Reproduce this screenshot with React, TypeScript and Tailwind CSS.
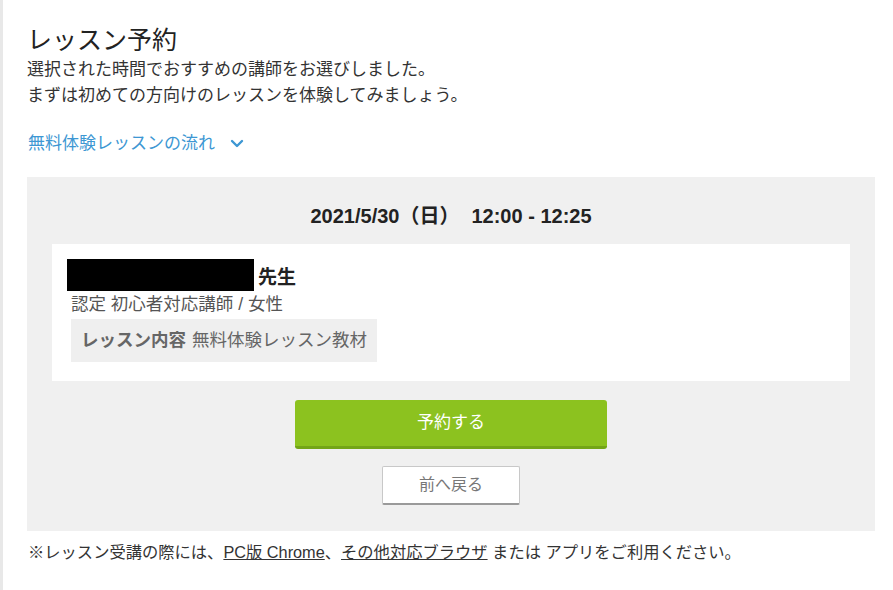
const jp = '"Liberation Sans", "Noto Sans CJK JP", sans-serif';

function ChevronDown() {
  return (
    <svg viewBox="0 0 14 10" className="h-[10px] w-[14px]" fill="none" stroke="currentColor" strokeWidth={2.4} strokeLinecap="round" strokeLinejoin="round">
      <path d="M2 2l5 5 5-5" />
    </svg>
  );
}

function TeacherCard() {
  return (
    <div className="mx-[25px] mt-[15px] bg-white px-[15px] pt-[15px] pb-[19px]">
      <div className="flex items-end gap-[4px]">
        <div className="h-[32px] w-[187px] bg-black" />
        <span className="text-[19px] font-bold leading-[26px] text-[#222]">先生</span>
      </div>
      <p className="mt-[1px] pl-[4px] text-[17.5px] leading-[24px] text-[#555]">認定 初心者対応講師 / 女性</p>
      <div className="mt-[3px] ml-[4px] flex h-[43px] w-[306px] items-center gap-[6px] bg-[#efefef] px-[10px] text-[17.5px] text-[#666]">
        <span className="font-bold">レッスン内容</span>
        <span>無料体験レッスン教材</span>
      </div>
    </div>
  );
}

export default function App() {
  return (
    <div className="min-h-[590px] w-[893px] border-l-[3px] border-[#e8e8e8] bg-white" style={{ fontFamily: jp }}>
      <div className="pl-[24px] pr-[15px] pt-[23px]">
        <h1 className="text-[25px] font-normal leading-[34px] text-[#222]">レッスン予約</h1>
        <p className="text-[17px] leading-[26px] text-[#333]">
          選択された時間でおすすめの講師をお選びしました。
          <br />
          まずは初めての方向けのレッスンを体験してみましょう。
        </p>
        <div className="mt-[22px] flex items-center gap-[15px] pl-[1px] text-[17px] text-[#3d97d3]">
          <span>無料体験レッスンの流れ</span>
          <ChevronDown />
        </div>

        <section className="mt-[20px] w-[848px] bg-[#f0f0f0] pt-[26px] pb-[26px]">
          <h2 className="flex justify-center gap-[12px] text-[20px] font-bold leading-[26px] text-[#222]">
            <span>2021/5/30（日）</span>
            <span>12:00 - 12:25</span>
          </h2>
          <TeacherCard />
          <div className="mt-[19px] flex flex-col items-center gap-[17px]">
            <button className="h-[49px] w-[312px] rounded-[3px] border-b-[3px] border-[#73a517] bg-[#8cc21f] text-[17px] text-white">
              予約する
            </button>
            <button className="h-[39px] w-[138px] rounded-[2px] border border-b-2 border-[#c8c8c8] border-b-[#9a9a9a] bg-white text-[16px] text-[#777]">
              前へ戻る
            </button>
          </div>
        </section>

        <p className="mt-[10px] pl-[1px] text-[16.3px] leading-[22px] text-[#333]">
          ※レッスン受講の際には、<span className="underline">PC版 Chrome</span>、<span className="underline">その他対応ブラウザ</span> または アプリをご利用ください。
        </p>
      </div>
    </div>
  );
}
